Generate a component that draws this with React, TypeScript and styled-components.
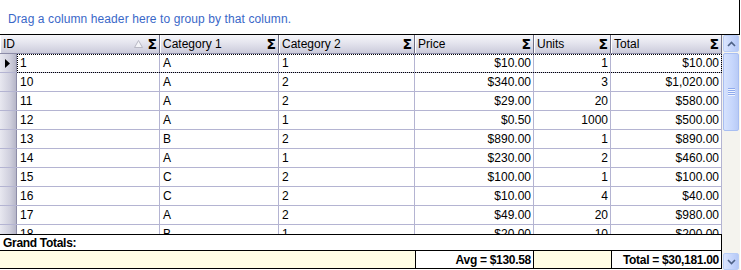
import React from "react";
import styled, { createGlobalStyle } from "styled-components";

const Global = createGlobalStyle`
  html, body { margin: 0; padding: 0; background: #fff; }
  body { font-family: "Liberation Sans", Arial, sans-serif; font-size: 11px; color: #000; }
`;

type Col = { key: string; w: number; label: string; right: boolean };
const cols: Col[] = [
  { key: "id", w: 160, label: "ID", right: false },
  { key: "c1", w: 119, label: "Category 1", right: false },
  { key: "c2", w: 136, label: "Category 2", right: false },
  { key: "price", w: 119, label: "Price", right: true },
  { key: "units", w: 77, label: "Units", right: true },
  { key: "total", w: 111, label: "Total", right: true },
];

const rows: string[][] = [
  ["1", "A", "1", "$10.00", "1", "$10.00"],
  ["10", "A", "2", "$340.00", "3", "$1,020.00"],
  ["11", "A", "2", "$29.00", "20", "$580.00"],
  ["12", "A", "1", "$0.50", "1000", "$500.00"],
  ["13", "B", "2", "$890.00", "1", "$890.00"],
  ["14", "A", "1", "$230.00", "2", "$460.00"],
  ["15", "C", "2", "$100.00", "1", "$100.00"],
  ["16", "C", "2", "$10.00", "4", "$40.00"],
  ["17", "A", "2", "$49.00", "20", "$980.00"],
  ["18", "B", "1", "$20.00", "10", "$200.00"],
];

const Frame = styled.div`
  width: 741px;
  height: 270px;
  display: flex;
  flex-direction: column;
  overflow: hidden;
  background: #fff;
`;

const GroupPanel = styled.div`
  height: 34px;
  box-sizing: border-box;
  border-right: 1px solid #000;
  margin-right: 1px;
  padding: 12px 0 0 8px;
  color: #3a68c8;
  font-size: 12px;
  letter-spacing: 0.1px;
  font-family: "Liberation Sans", Arial, sans-serif;
`;

const Main = styled.div`
  display: flex;
  flex: 1;
  min-height: 0;
`;

const GridArea = styled.div`
  width: 722px;
  display: flex;
  flex-direction: column;
  border-top: 1px solid #000;
`;

const HeaderRow = styled.div`
  display: flex;
  height: 19px;
  box-sizing: border-box;
  border-bottom: 1px solid #8c8ca8;
`;

const HeaderCell = styled.div<{ $w: number }>`
  width: ${(p) => p.$w}px;
  box-sizing: border-box;
  display: flex;
  align-items: center;
  padding: 0 2px 0 3px;
  background: linear-gradient(#f6f6fa, #e2e2ec 50%, #cbcbdb);
  border-right: 1px solid #6e6e84;
  box-shadow: inset 1px 0 0 #fff;
  font-size: 12px;
`;

const HeaderLabel = styled.span`
  flex: 1;
`;

const Sigma = styled.span`
  font-family: "DejaVu Sans", sans-serif;
  font-weight: bold;
  font-size: 14px;
  line-height: 1;
`;

const SortMark = styled.svg`
  margin-right: 4px;
`;

const Rows = styled.div`
  height: 180px;
  overflow: hidden;
`;

const Row = styled.div`
  display: flex;
  height: 19px;
  box-sizing: border-box;
  border-bottom: 1px solid #b4b4d2;
  position: relative;
`;

const Selector = styled.div`
  width: 17px;
  flex: none;
  box-sizing: border-box;
  background: linear-gradient(90deg, #e8e8f0, #d0d0de 60%, #b6b6c8);
  border-right: 1px solid #8c8ca8;
  display: flex;
  align-items: center;
  padding-left: 5px;
`;

const Cell = styled.div<{ $w: number; $right: boolean }>`
  width: ${(p) => p.$w}px;
  flex: none;
  box-sizing: border-box;
  border-right: 1px solid #b4b4d2;
  padding: 0 2px 0 3px;
  display: flex;
  align-items: center;
  justify-content: ${(p) => (p.$right ? "flex-end" : "flex-start")};
  font-size: 12px;
  white-space: nowrap;
  overflow: hidden;
`;

const Focus = styled.div`
  position: absolute;
  left: 17px;
  top: 0;
  right: 0;
  bottom: -1px;
  border: 1px dotted #000;
  pointer-events: none;
`;

const TotalsLabel = styled.div`
  height: 17px;
  box-sizing: border-box;
  border-top: 1px solid #000;
  border-bottom: 1px solid #000;
  border-right: 1px solid #000;
  font-weight: bold;
  font-size: 12px;
  padding: 1px 0 0 3px;
  letter-spacing: -0.3px;
`;

const SummaryRow = styled.div`
  display: flex;
  height: 18px;
  box-sizing: border-box;
  border-bottom: 1px solid #000;
  background: #fffde4;
`;

const SummaryCell = styled.div<{ $w: number; $filled: boolean }>`
  width: ${(p) => p.$w}px;
  box-sizing: border-box;
  border-left: ${(p) => (p.$filled ? "1px solid #000" : "none")};
  border-right: ${(p) => (p.$filled ? "1px solid #000" : "none")};
  background: ${(p) => (p.$filled ? "#fff" : "transparent")};
  display: flex;
  align-items: center;
  justify-content: flex-end;
  padding-right: 2px;
  font-weight: bold;
  font-size: 12px;
  letter-spacing: -0.3px;
`;

const ScrollBar = styled.div`
  width: 18px;
  display: flex;
  flex-direction: column;
  background: #f4f3ee;
  border-top: 1px solid #000;
`;

const ScrollBtn = styled.div`
  height: 17px;
  flex: none;
  margin: 0 1px;
  box-sizing: border-box;
  border: 1px solid #b9cdf6;
  border-radius: 2px;
  background: linear-gradient(90deg, #dbe5fd, #c4d4fb 60%, #b5c8f6);
  display: flex;
  align-items: center;
  justify-content: center;
`;

const Track = styled.div`
  flex: 1;
  display: flex;
  flex-direction: column;
  padding-top: 1px;
`;

const Thumb = styled.div`
  height: 78px;
  margin: 0 1px;
  box-sizing: border-box;
  border: 1px solid #a8bef2;
  border-radius: 2px;
  background: linear-gradient(90deg, #d6e2fd, #c6d6fc 60%, #b9cbf6);
  display: flex;
  align-items: center;
  justify-content: center;
`;

const Arrow = ({ up }: { up: boolean }) => (
  <svg width="9" height="6" viewBox="0 0 9 6">
    <path
      d={up ? "M1 5 L4.5 1.5 L8 5" : "M1 1 L4.5 4.5 L8 1"}
      fill="none"
      stroke="#4d6185"
      strokeWidth="1.6"
    />
  </svg>
);

const Grip = () => (
  <svg width="7" height="8" viewBox="0 0 7 8">
    {[0.5, 1.5, 2.5, 3.5, 4.5, 5.5, 6.5, 7.5].map((y, i) => (
      <line key={y} x1="0" x2="7" y1={y} y2={y} stroke={i % 2 ? "#eef3fe" : "#8faaed"} />
    ))}
  </svg>
);

export default function App() {
  return (
    <Frame>
      <Global />
      <GroupPanel>Drag a column header here to group by that column.</GroupPanel>
      <Main>
        <GridArea>
          <HeaderRow>
            {cols.map((c) => (
              <HeaderCell key={c.key} $w={c.w}>
                <HeaderLabel>{c.label}</HeaderLabel>
                {c.key === "id" && (
                  <SortMark width="9" height="8" viewBox="0 0 9 8">
                    <path d="M4.5 0.5 L8.5 7.5 L0.5 7.5 Z" fill="#f4f4f8" stroke="#b8b8c4" />
                  </SortMark>
                )}
                <Sigma>Σ</Sigma>
              </HeaderCell>
            ))}
          </HeaderRow>
          <Rows>
            {rows.map((r, i) => (
              <Row key={i}>
                <Selector>
                  {i === 0 && (
                    <svg width="5" height="9" viewBox="0 0 5 9">
                      <path d="M0 0 L5 4.5 L0 9 Z" fill="#000" />
                    </svg>
                  )}
                </Selector>
                {cols.map((c, j) => (
                  <Cell key={c.key} $w={j === 0 ? c.w - 17 : c.w} $right={c.right}>
                    {r[j]}
                  </Cell>
                ))}
                {i === 0 && <Focus />}
              </Row>
            ))}
          </Rows>
          <TotalsLabel>Grand Totals:</TotalsLabel>
          <SummaryRow>
            {cols.map((c) => (
              <SummaryCell key={c.key} $w={c.w} $filled={c.key === "price" || c.key === "total"}>
                {c.key === "price" ? "Avg = $130.58" : c.key === "total" ? "Total = $30,181.00" : ""}
              </SummaryCell>
            ))}
          </SummaryRow>
        </GridArea>
        <ScrollBar>
          <ScrollBtn>
            <Arrow up />
          </ScrollBtn>
          <Track>
            <Thumb>
              <Grip />
            </Thumb>
          </Track>
          <ScrollBtn>
            <Arrow up={false} />
          </ScrollBtn>
        </ScrollBar>
      </Main>
    </Frame>
  );
}
